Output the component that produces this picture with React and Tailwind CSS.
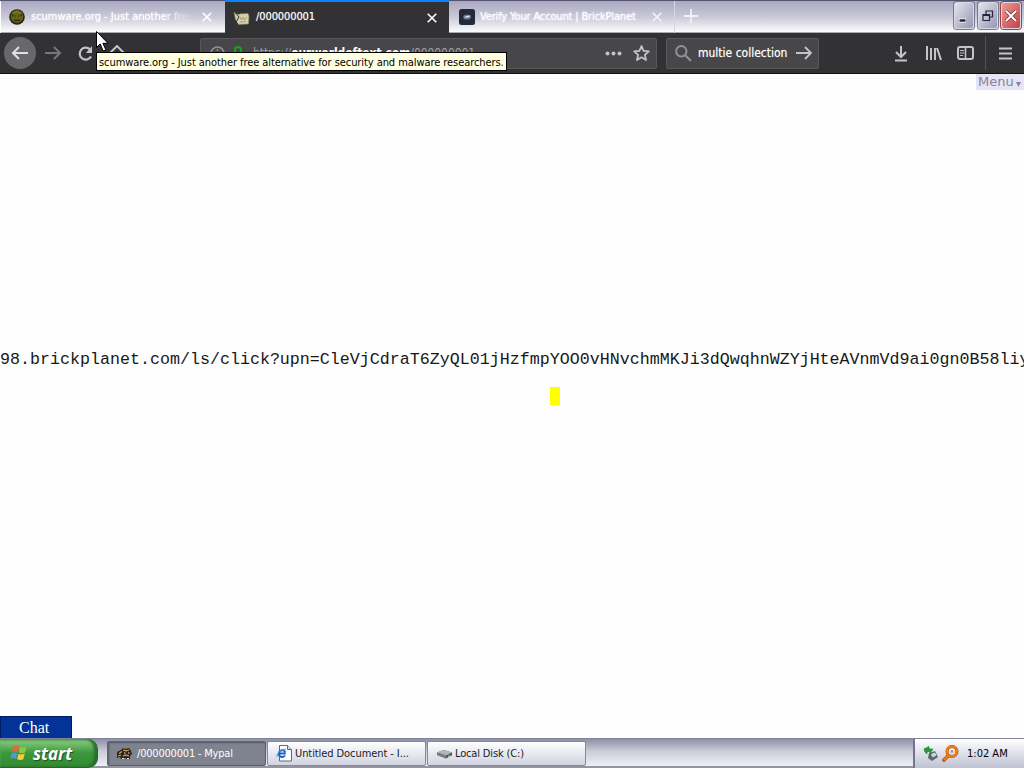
import React from 'react';

const ui = "font-['DejaVu_Sans_Condensed','DejaVu_Sans',sans-serif] [font-stretch:condensed]";

const Close = ({ className }) => (
  <svg className={className} width="10" height="10" viewBox="0 0 10 10" fill="none" stroke="currentColor" strokeWidth="1.6">
    <path d="M.7.7l8.6 8.6M9.3.7L.7 9.3" />
  </svg>
);

const FaceIcon = () => (
  <svg width="16" height="16" viewBox="0 0 16 16">
    <circle cx="8" cy="8" r="7.8" fill="#292a14" />
    <circle cx="8" cy="7.5" r="6.2" fill="#66641a" />
    <path d="M3 5.2l3.8 1.2-.5 1.7-3-.6zM13 5.2l-3.8 1.2 .5 1.7 3-.6z" fill="#25250a" />
    <path d="M4.3 7h1.4M10.3 7h1.4" stroke="#b3ae38" />
    <path d="M5 11.3h6" stroke="#2d2c0c" strokeWidth="1.4" />
    <path d="M4 4q4-3 8 0" stroke="#88842c" fill="none" />
  </svg>
);

const ScrollIcon = () => (
  <svg width="17" height="16" viewBox="0 0 17 16">
    <path d="M1 2l3 2 11-.5 1 2.5-.5 8-10 .5-3-5z" fill="#d5cfaa" stroke="#8a8468" strokeWidth=".6" />
    <path d="M1 1l5 6-3 5M2 2.5l5 1.5" stroke="#39352c" fill="none" />
    <path d="M7 7l1.500 3L10 7l1.500 3L14 7M7 12l6-.5" stroke="#9c9274" fill="none" strokeWidth=".8" />
  </svg>
);

const PlanetIcon = () => (
  <svg width="16" height="16" viewBox="0 0 16 16">
    <rect width="16" height="16" rx="2.500" fill="#222a3c" />
    <ellipse cx="8" cy="8" rx="3.800" ry="2.600" fill="#68758b" />
    <path d="M5 8.500l2-1.500 4.500-.5-1.500 2z" fill="#d9e0e9" />
  </svg>
);

const RaccoonIcon = () => (
  <svg width="17" height="15" viewBox="0 0 17 15">
    <path d="M1 6l4-2 2-2 2 1 4-1 2 3 1 3-2 2v3h-3l-2-1-2 1H5l-1-2-3 1z" fill="#2c251c" />
    <path d="M7 4l3 .8 3-.8M3 7.500l3-2M7 10l3-1 3 1M2 10l3-1" stroke="#d0a45b" strokeWidth="1.200" fill="none" />
    <path d="M8 7h1.500M12 7h1.500M6 12.500h2M11 12.500h2" stroke="#f0dfbd" />
  </svg>
);

const PageIcon = () => (
  <svg width="17" height="17" viewBox="0 0 17 17">
    <path d="M3.500.5h8l4 4v11.500h-12z" fill="#fff" stroke="#596883" />
    <path d="M11.500.5v4h4" fill="#dce3ed" stroke="#596883" />
    <path d="M9 10.500A3.400 3.400 0 1 1 9.300 7.300M2.500 8.500h7.200" stroke="#1c61c4" strokeWidth="2" fill="none" />
    <path d="M.7 12Q1.500 5 10 4" stroke="#579ce3" fill="none" />
  </svg>
);

const DiskIcon = () => (
  <svg width="17" height="12" viewBox="0 0 17 12">
    <path d="M1 4.500L8 2l8 2.500v2.800L10 10.500 1 7z" fill="#555" />
    <path d="M1 4.500L8 2l8 2.500-6 3z" fill="#b5b5b5" />
    <path d="M1 4.500l9 3v3L1 7z" fill="#7d7d7d" />
    <path d="M12 8.500l2-1" stroke="#b8d7a2" />
  </svg>
);

const Flag = () => (
  <svg width="18" height="18" viewBox="0 0 18 18">
    <path d="M3.500 2.500Q6 .7 8.900 2.300L7.600 8Q5 6.700 2 8z" fill="#ee6435" />
    <path d="M10 2.800q3 1.500 6.500-.2L15 8.400q-3 1.500-6.200 0z" fill="#8bc93f" />
    <path d="M1.800 9.200q3-1.500 5.600 0L6 14.800q-2.800-1.500-5.700 0z" fill="#5394e8" />
    <path d="M8.500 9.700q3 1.400 6.300-.1l-1.500 5.700q-3 1.600-6.200 0z" fill="#f8cc3c" />
  </svg>
);

const caption = 'flex h-[27px] w-5 shrink-0 items-center justify-center rounded-[3px] border border-[#d8d8e6]';

const TabBar = () => (
  <div className="flex h-[33px] shrink-0 border-t border-[#55536f] bg-linear-to-b from-[#aaa8c0] via-[#cac9d8] to-[#fff] shadow-[inset_0_-1px_0_#aaaab2]">
    <div className="flex w-[225px] shrink-0 items-center border-l border-white pl-2 text-white">
      <FaceIcon />
      <span className="ml-[6px] w-[162px] overflow-hidden whitespace-nowrap text-[11px] [mask-image:linear-gradient(to_right,black_82%,transparent)] [text-shadow:0_0_2px_#fff]">scumware.org - Just another free</span>
      <Close className="ml-[9px]" />
    </div>
    <div className="-mt-px flex w-[224px] shrink-0 items-center border-t-2 border-[#0a84ff] bg-[#323234] pl-[8px] text-white">
      <ScrollIcon />
      <span className="ml-[6px] w-[162px] text-[11px] tracking-[-0.1px] [text-shadow:0_0_1px_#aaa]">/000000001</span>
      <Close className="ml-[9px]" />
    </div>
    <div className="flex w-[226px] shrink-0 items-center border-r border-[#d7d7e3] pl-[10px] text-white">
      <PlanetIcon />
      <span className="ml-[5px] w-[162px] whitespace-nowrap text-[11px] tracking-[-0.15px] [text-shadow:0_0_2px_#fff]">Verify Your Account | BrickPlanet</span>
      <Close className="ml-[10px] text-[#f4f4fa]" />
    </div>
    <svg className="ml-[9px] mt-2 text-[#f0f0f7]" width="14" height="14" fill="none" stroke="currentColor" strokeWidth="1.8"><path d="M7 0v14M0 7h14" /></svg>
    <div className="ml-auto mt-px flex gap-[3px] pr-[3px]">
      <div className={caption + ' bg-linear-to-br from-[#e5e5ee] to-[#9798b1] shadow-[0_0_0_1px_#77788f]'}>
        <svg width="14" height="16" viewBox="0 0 14 16"><path d="M2 12.5h7" stroke="#fff" strokeWidth="4" /><path d="M2.500 12.5h6" stroke="#24243e" strokeWidth="2.5" /></svg>
      </div>
      <div className={caption + ' ml-px bg-linear-to-br from-[#e5e5ee] to-[#9798b1] shadow-[0_0_0_1px_#77788f]'}>
        <svg width="12" height="12" viewBox="0 0 12 12" fill="none" stroke="#24243e" strokeWidth="1.2"><path d="M4 4V1h6.500v6H8M1 4.5h6.5v6H1zM1 5.5h6.5" /></svg>
      </div>
      <div className={caption + ' bg-linear-to-br from-[#ed9893] to-[#c53f45] shadow-[0_0_0_1px_#98434f]'}>
        <svg width="14" height="14" viewBox="0 0 14 14" fill="none"><path d="M2 2l10 10M12 2L2 12" stroke="#702735" strokeWidth="3.5" /><path d="M2 2l10 10M12 2L2 12" stroke="#fff" strokeWidth="2.1" /></svg>
      </div>
    </div>
  </div>
);

const Toolbar = () => (
  <div className="flex h-[41px] shrink-0 items-center border-b border-[#111114] bg-[#323234] text-[#c4c4c6]">
    <div className="ml-1 flex h-8 w-8 items-center justify-center rounded-full bg-[#68686a] text-[#e0e0e0]">
      <svg width="18" height="16" viewBox="0 0 18 16" fill="none" stroke="currentColor" strokeWidth="2"><path d="M17 8H2M8 2L2 8l6 6" /></svg>
    </div>
    <svg className="ml-[9px] text-[#77777a]" width="17" height="16" viewBox="0 0 17 16" fill="none" stroke="currentColor" strokeWidth="2"><path d="M0 8h15M9 2l6 6-6 6" /></svg>
    <svg className="ml-[15px]" width="17" height="17" viewBox="0 0 17 17" fill="none" stroke="currentColor" strokeWidth="2.2"><path d="M14 11.5A6 6 0 1 1 13.5 5" /><path d="M15 1v7H9z" fill="currentColor" stroke="none" /></svg>
    <svg className="ml-[15px]" width="17" height="16" viewBox="0 0 17 16" fill="none" stroke="currentColor" strokeWidth="2"><path d="M1 8l7-7 7 7M4 7v8h9V7" /></svg>
    <div className="ml-[74px] flex h-[31px] w-[457px] items-center rounded-[2px] border border-[#58585b] bg-[#474749]">
      <svg className="ml-[9px] text-[#929295]" width="15" height="15" viewBox="0 0 15 15" fill="none" stroke="currentColor" strokeWidth="1.5"><circle cx="7.5" cy="7.5" r="6.5" /><path d="M7.5 6v5M7.5 3v2" /></svg>
      <svg className="ml-[8px]" width="10" height="14" viewBox="0 0 10 14"><path d="M2 7V4a3 3 0 0 1 6 0v3" stroke="#12a714" strokeWidth="2" fill="none" /><rect y="7" width="10" height="7" fill="#12a714" /></svg>
      <span className="ml-[10px] whitespace-nowrap text-[12px] tracking-[-0.07px] text-[#a1a1a4]">https://<b className="text-white">ourworldoftext.com</b>/000000001</span>
      <svg className="ml-auto" width="17" height="5" viewBox="0 0 17 5" fill="currentColor"><circle cx="2.5" cy="2.5" r="2" /><circle cx="8.5" cy="2.5" r="2" /><circle cx="14.5" cy="2.5" r="2" /></svg>
      <svg className="ml-[11px] mr-[6px]" width="17" height="17" viewBox="0 0 17 17" fill="none" stroke="currentColor" strokeWidth="1.8" strokeLinejoin="round"><path d="M8.5 1l2.1 4.8 5.2.5-3.9 3.5 1.1 5.2-4.5-2.7L4 15l1.1-5.2-3.9-3.5 5.2-.5z" /></svg>
    </div>
    <div className="ml-[9px] flex h-[31px] w-[153px] items-center rounded-[2px] border border-[#58585b] bg-[#474749]">
      <svg className="ml-[8px] text-[#929295]" width="17" height="17" viewBox="0 0 17 17" fill="none" stroke="currentColor" strokeWidth="2"><circle cx="6.3" cy="6.3" r="5.2" /><path d="M10 10l6 6" /></svg>
      <span className="ml-[6px] w-[98px] whitespace-nowrap text-[12px] text-white [text-shadow:0_0_1px_#aaa]">multie collection</span>
      <svg width="17" height="14" viewBox="0 0 17 14" fill="none" stroke="currentColor" strokeWidth="1.8"><path d="M0 7h15M9 1l6 6-6 6" /></svg>
    </div>
    <div className="ml-auto flex items-center">
      <svg width="14" height="17" viewBox="0 0 14 17" fill="none" stroke="currentColor" strokeWidth="2"><path d="M7 1v11M2 7l5 5 5-5M1 15.5h12" /></svg>
      <svg className="ml-[18px]" width="16" height="16" viewBox="0 0 16 16" fill="none" stroke="currentColor" strokeWidth="2"><path d="M1 1v14M5 3v12M9 3v12M11 3l4 12" /></svg>
      <svg className="ml-[15px]" width="17" height="14" viewBox="0 0 17 14" fill="none" stroke="currentColor" strokeWidth="2"><rect x="1" y="1" width="15" height="12" rx="2" /><path d="M8.500 1v12" strokeWidth="1.600" /><path d="M3 4.5h4M3 7h4M3 9.5h3" strokeWidth="1" /></svg>
      <div className="ml-[11px] h-[34px] w-px bg-[#525255]" />
      <svg className="ml-[13px] mr-[12px]" width="13" height="13" viewBox="0 0 13 13" stroke="currentColor" strokeWidth="2"><path d="M0 1.5h13M0 6.5h13M0 11.5h13" /></svg>
    </div>
  </div>
);

const World = () => (
  <main className="flex min-h-0 flex-1 flex-col overflow-hidden bg-[#fefefe]">
    <div className="flex h-[16px] w-[48px] shrink-0 items-center self-end whitespace-nowrap bg-[#e7e5f5] pl-[2px] font-['DejaVu_Sans',sans-serif] text-[13px] leading-[16px] text-[#85849c] [font-stretch:normal]">
      <span>Menu</span>
      <svg className="ml-[2px] mt-[5px] shrink-0" width="5" height="5"><path d="M0 0h5L2.5 5z" fill="currentColor" /></svg>
    </div>
    <div className="mt-[261px] h-[18px] shrink-0 whitespace-pre font-['Liberation_Mono',monospace] text-[16.667px] leading-[18px] text-[#181818]">98.brickplanet.com/ls/click?upn=CleVjCdraT6ZyQL01jHzfmpYOO0vHNvchmMKJi3dQwqhnWZYjHteAVnmVd9ai0gn0B58liy</div>
    <div className="ml-[550px] mt-[18px] h-[18px] w-[10px] shrink-0 bg-[#ff0]" />
    <div className="mt-auto flex h-[22px] w-[72px] shrink-0 items-center border border-b-0 border-[#001b66] bg-[#043398] pl-[18px] pt-px font-['Liberation_Serif',serif] text-[16px] leading-none text-white [font-stretch:normal]">Chat</div>
  </main>
);

const task = 'flex h-[25px] items-center whitespace-nowrap rounded-[2px] border pl-2 text-[11px]';

const Taskbar = () => (
  <footer className="flex h-[30px] shrink-0 border-t border-[#81839b] bg-linear-to-b from-[#8e90a5] via-[#c9cad8] via-40% to-[#f4f4fa] shadow-[inset_0_-2px_0_#92949f]">
    <div className="flex h-[29px] w-[98px] items-center rounded-r-[10px] border-r border-b border-[#246626] bg-linear-to-b from-[#90ce87] via-[#3b983a] to-[#338a32] pl-[10px] shadow-[inset_-3px_0_3px_#286d28,inset_0_2px_2px_#62b35d]">
      <Flag />
      <span className="ml-[5px] font-['Open_Sans',sans-serif] text-[17px] leading-none font-bold text-white italic [font-stretch:normal] [text-shadow:1px_1px_1px_#254c24]">start</span>
    </div>
    <div className="ml-[9px] mt-[2px] flex gap-[2px]">
      <div className={task + ' w-[159px] border-[#5c6070] bg-[#7e838d] text-white shadow-[inset_1px_1px_2px_#555b68]'}>
        <RaccoonIcon /><span className="ml-[4px] mt-[2px] tracking-[-0.2px]">/000000001 - Mypal</span>
      </div>
      <div className={task + ' -ml-px w-[159px] border-[#85889e] bg-linear-to-b from-white to-[#d1d3e1] text-[#222]'}>
        <PageIcon /><span className="ml-[2px] mt-px tracking-[-0.08px]">Untitled Document - I...</span>
      </div>
      <div className={task + ' -ml-px w-[159px] border-[#85889e] bg-linear-to-b from-white to-[#d1d3e1] text-[#222]'}>
        <DiskIcon /><span className="ml-[2px] mt-px tracking-[-0.15px]">Local Disk (C:)</span>
      </div>
    </div>
    <div className="ml-auto flex w-[111px] items-center border-l-2 border-[#71758e] bg-linear-to-b from-white via-[#dedfea] to-[#bfc2d2] pl-[8px]">
      <svg width="17" height="17" viewBox="0 0 17 17"><path d="M6 8l6-2 3 6-6 4-4-3z" fill="#596865" /><path d="M8 9l4-1.500 1.500 3-4 2z" fill="#c2dce3" /><path d="M1 4l5-2.500V4h4L7 8V6.500H4V9L2 7z" fill="#239d37" stroke="#14732a" strokeWidth=".6" /></svg>
      <svg className="ml-[2px]" width="17" height="17" viewBox="0 0 17 17" fill="none"><path d="M2 15l4-4" stroke="#b55209" strokeWidth="3.600" strokeLinecap="round" /><circle cx="10" cy="6.5" r="5" stroke="#b55209" strokeWidth="3" /><circle cx="10" cy="6.5" r="5" stroke="#f38016" strokeWidth="2" /><path d="M2 15l4-4" stroke="#f38016" strokeWidth="2" /><circle cx="10" cy="6.5" r="1.2" fill="#e37713" /></svg>
      <span className="ml-[8px] mt-px whitespace-nowrap text-[11px] text-black">1:02 AM</span>
    </div>
  </footer>
);

export default function App() {
  return (
    <div className={'relative flex h-[768px] w-[1024px] flex-col overflow-hidden ' + ui}>
      <TabBar />
      <Toolbar />
      <World />
      <Taskbar />
      <div className="absolute top-[52px] left-[96px] flex h-[19px] w-[411px] items-center border border-black bg-[#ffffe1] pt-px pl-[2px] text-[11px] leading-none tracking-[-0.07px] whitespace-nowrap text-black">
        scumware.org - Just another free alternative for security and malware researchers.
      </div>
      <svg className="absolute top-[31px] left-[96px]" width="13" height="21" viewBox="0 0 13 21"><path d="M.5.5v16l3.7-3.5 3 7 2.7-1.2-3-6.5H12z" fill="#fff" stroke="#000" /></svg>
    </div>
  );
}
